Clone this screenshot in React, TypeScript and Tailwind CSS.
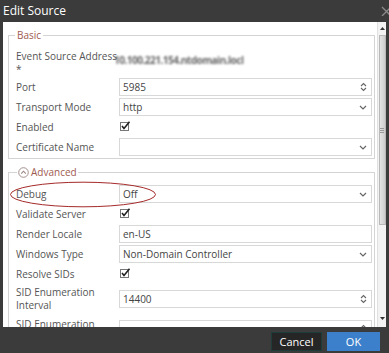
import React from "react";

const Spin = () => (
  <svg width="7" height="10" viewBox="0 0 7 10" fill="none" stroke="#666" strokeWidth="1.1">
    <path d="M1 4 L3.5 1.5 L6 4" />
    <path d="M1 6 L3.5 8.5 L6 6" />
  </svg>
);

const Chev = () => (
  <svg width="8" height="5" viewBox="0 0 8 5" fill="none" stroke="#666" strokeWidth="1.2">
    <path d="M1 1 L4 4 L7 1" />
  </svg>
);

const Check = () => (
  <svg width="11" height="10" viewBox="0 0 11 10">
    <rect x="0.5" y="1.5" width="8" height="8" fill="white" stroke="#777" />
    <path d="M2 5 L4 7.5 L9.5 0.8" fill="none" stroke="#222" strokeWidth="1.6" />
  </svg>
);

function Box({ value, icon }: { value?: string; icon?: React.ReactNode }) {
  return (
    <div className="h-[18px] flex-1 border border-[#d8d8d8] flex items-center pl-[3px] pr-[4px] text-[#444]">
      <span className="flex-1 leading-none">{value}</span>
      {icon}
    </div>
  );
}

function Row({
  label,
  children,
  className = "h-[20px] items-center",
  labelClass = "",
}: {
  label: React.ReactNode;
  children?: React.ReactNode;
  className?: string;
  labelClass?: string;
}) {
  return (
    <div className={"flex " + className}>
      <div className={"w-[103px] shrink-0 text-[#555] leading-[13px] " + labelClass}>{label}</div>
      <div className="flex-1 flex items-center">{children}</div>
    </div>
  );
}

export default function App() {
  return (
    <div className="relative w-[389px] h-[353px] bg-[#3b3b3b] flex flex-col overflow-hidden font-['Open_Sans',sans-serif] text-[10px]">
      {/* title bar */}
      <div className="h-[22px] shrink-0 flex items-center justify-between pl-[3px]">
        <span className="text-white text-[12px] leading-none">Edit Source</span>
        <svg width="10" height="10" viewBox="0 0 10 10" className="mr-[-2px]" stroke="#8a8a8a" strokeWidth="1.3">
          <path d="M1 1 L10 10 M10 1 L1 10" />
        </svg>
      </div>

      {/* body */}
      <div className="mx-[3px] flex-1 bg-white flex overflow-hidden">
        <div className="flex-1 pl-[5px] pr-[2px] pt-[6px] overflow-hidden">
          <fieldset className="border border-[#d4d4d4] pl-[7px] pr-[2px] pb-[1px]">
            <legend className="ml-[-1px] px-[2px] h-[14px] leading-[14px] text-[#a05a50]">Basic</legend>
            <div className="pt-[7px]">
              <Row label={<>Event Source Address<br />*</>} className="h-[28px] items-start" labelClass="pt-[1px] leading-[11px]">
                <span className="ml-[-5px] mt-[4px] text-[#666] blur-[1.3px] font-bold tracking-[-0.5px] whitespace-nowrap">
                  10.100.221.154.ntdomain.locl
                </span>
              </Row>
              <Row label="Port">
                <Box value="5985" icon={<Spin />} />
              </Row>
              <Row label="Transport Mode">
                <Box value="http" icon={<Chev />} />
              </Row>
              <Row label="Enabled">
                <span className="ml-[1px] mt-[-2px]"><Check /></span>
              </Row>
              <Row label="Certificate Name">
                <Box icon={<Chev />} />
              </Row>
            </div>
          </fieldset>

          <fieldset className="mt-[6px] border border-[#d4d4d4] pl-[7px] pr-[2px]">
            <legend className="ml-[1px] px-[1px] h-[14px] leading-[14px] text-[#a05a50] flex items-center gap-[2px]">
              <svg width="11" height="11" viewBox="0 0 11 11" fill="none" stroke="#9a8482" strokeWidth="0.9">
                <circle cx="5.5" cy="5.5" r="4.8" />
                <path d="M3.2 6.6 L5.5 4.2 L7.8 6.6" strokeWidth="1.1" />
              </svg>
              <span>Advanced</span>
            </legend>
            <div className="pt-[5px]">
              <Row label="Debug">
                <Box value="Off" icon={<Chev />} />
              </Row>
              <Row label="Validate Server">
                <span className="ml-[1px] mt-[-2px]"><Check /></span>
              </Row>
              <Row label="Render Locale">
                <Box value="en-US" />
              </Row>
              <Row label="Windows Type">
                <Box value="Non-Domain Controller" icon={<Chev />} />
              </Row>
              <Row label="Resolve SIDs">
                <span className="ml-[1px] mt-[-2px]"><Check /></span>
              </Row>
              <Row label={<>SID Enumeration<br />Interval</>} className="h-[30px] items-start" labelClass="pt-[2px]">
                <div className="flex-1 flex mt-[6px]">
                  <Box value="14400" icon={<Spin />} />
                </div>
              </Row>
              <Row label="SID Enumeration" className="h-[30px] items-start" labelClass="pt-[4px]">
                <div className="flex-1 flex mt-[6px]">
                  <Box icon={<Spin />} />
                </div>
              </Row>
            </div>
          </fieldset>
        </div>

        {/* scrollbar */}
        <div className="w-[9px] shrink-0 bg-[#f3f3f3] border-l border-[#e0e0e0] flex flex-col items-center">
          <div className="h-[13px] flex items-center justify-center">
            <svg width="5" height="3" viewBox="0 0 5 3"><path d="M0 3 L2.5 0 L5 3 Z" fill="#333" /></svg>
          </div>
          <div className="w-[7px] h-[190px] bg-gradient-to-r from-[#e4e4e4] to-[#cdcdcd] border border-[#b8b8b8] flex items-center justify-center">
            <div className="w-[4px] h-[5px] border-y border-[#999] flex items-center">
              <div className="w-full h-[1px] bg-[#999]" />
            </div>
          </div>
          <div className="flex-1" />
          <div className="h-[10px] flex items-start justify-center">
            <svg width="5" height="3" viewBox="0 0 5 3"><path d="M0 0 L2.5 3 L5 0 Z" fill="#333" /></svg>
          </div>
        </div>
      </div>

      {/* footer */}
      <div className="h-[26px] shrink-0 flex items-start justify-end gap-[5px] pt-[5px] pr-[9px]">
        <button className="w-[51px] h-[19px] bg-[#262626] border border-[#1d3d3a] text-white text-[11px] leading-none">
          Cancel
        </button>
        <button className="w-[53px] h-[19px] bg-[#3c7fcb] text-white text-[11px] leading-none">OK</button>
      </div>

      {/* red annotation ellipse */}
      <svg
        className="absolute left-[9px] top-[181px] pointer-events-none"
        width="148"
        height="27"
        viewBox="0 0 148 27"
        fill="none"
      >
        <ellipse cx="74" cy="13.5" rx="72.5" ry="12.3" stroke="#a52a2a" strokeWidth="1" />
      </svg>
    </div>
  );
}
